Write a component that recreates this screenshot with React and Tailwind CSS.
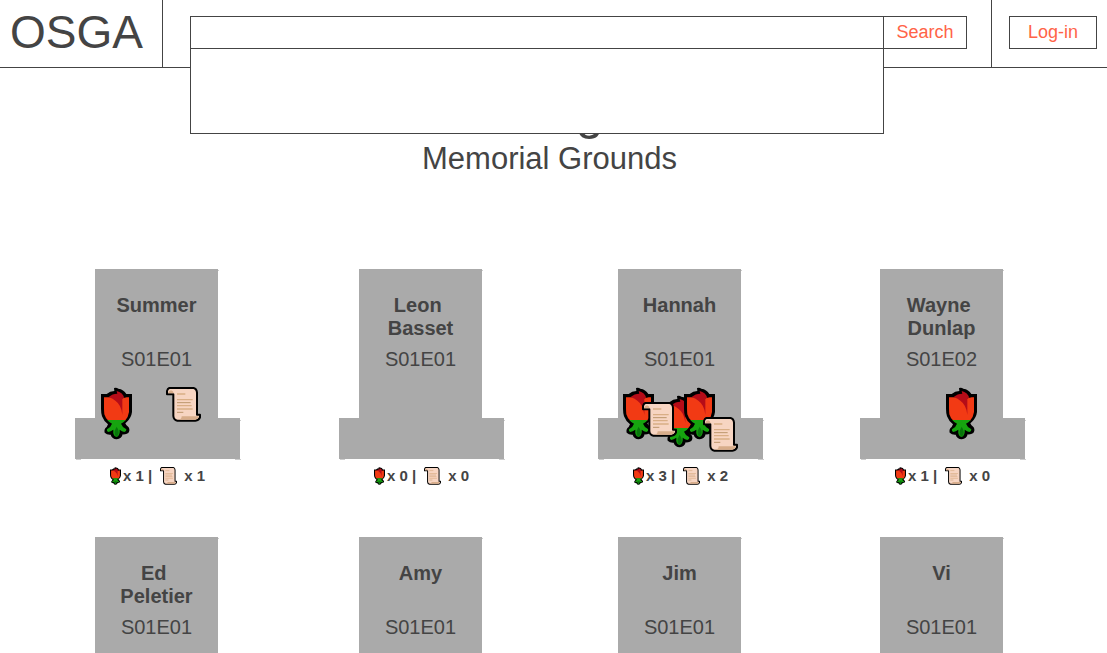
import React from "react";

const graves = [
  {
    name: "Summer",
    episode: "S01E01",
    roses: [{ x: 26, y: 118 }],
    scrolls: [{ x: 91, y: 118 }],
  },
  { name: "Leon \nBasset", episode: "S01E01", roses: [], scrolls: [] },
  {
    name: "Hannah",
    episode: "S01E01",
    roses: [
      { x: 25, y: 118 },
      { x: 66, y: 126 },
      { x: 86, y: 118 },
    ],
    scrolls: [
      { x: 44, y: 133 },
      { x: 105, y: 148 },
    ],
  },
  { name: "Wayne \nDunlap", episode: "S01E02", roses: [{ x: 86, y: 118 }], scrolls: [] },
  { name: "Ed \nPeletier", episode: "S01E01", roses: [], scrolls: [] },
  { name: "Amy", episode: "S01E01", roses: [], scrolls: [] },
  { name: "Jim", episode: "S01E01", roses: [], scrolls: [] },
  { name: "Vi", episode: "S01E01", roses: [], scrolls: [] },
];

function Rose({ className, style }) {
  return (
    <svg viewBox="0 0 93 159" preserveAspectRatio="none" className={className} style={style} aria-hidden="true">
      <path
        d="M0 21H17Q27 12 40 12L39 3Q46 0 52 5Q68 7 76 21H93V75Q91 92 78 104L73 109Q75 116 83 121Q88 130 82 138Q75 143 65 142Q62 155 47 157Q33 156 29 143Q18 144 11 137Q8 126 17 120L21 112Q8 102 3 88Q0 78 0 65Z"
        fill="#000"
      />
      <path d="M9 31H25Q43 25 54 37L77 31H84V75Q82 91 72 101H22Q13 93 10 82Q9 73 9 63Z" fill="#f23a14" />
      <path d="M23 30Q34 20 49 20L47 12Q64 16 70 32L64 33V83Q61 54 44 42Q36 35 23 30Z" fill="#b50c18" />
      <path d="M19 99H74Q68 107 60 110Q64 121 76 127Q77 134 70 135Q63 134 56 128Q58 145 47 150Q35 147 37 128Q29 134 22 135Q16 133 18 127Q29 122 33 110Q25 107 19 99Z" fill="#16a40f" />
      <path d="M47 119Q56 133 52 143L47 150L41 143Q39 130 47 119Z" fill="#08760b" />
    </svg>
  );
}

function Scroll({ className, style }) {
  return (
    <svg viewBox="0 0 105 105" preserveAspectRatio="none" className={className} style={style} aria-hidden="true">
      <path
        d="M10 3H83Q92 5 93 17V83H102V91Q99 100 88 101H34Q23 99 22 87V22H3V12Q5 5 10 3Z"
        fill="#f7d5c2"
        stroke="#000"
        strokeWidth="6"
        strokeLinejoin="round"
      />
      <path d="M6 19Q7 11 15 10Q22 12 23 19Z" fill="#d8ad8a" />
      <path d="M47 88H98Q97 97 87 98H36Q47 98 47 88Z" fill="#d8ad8a" />
      <path d="M33 21H58M33 38H80M33 56H77M33 66H80" stroke="#d9ae85" strokeWidth="4" />
      <path d="M33 47H74M33 76H52" stroke="#bc966b" strokeWidth="3" />
    </svg>
  );
}

function Grave({ grave }) {
  return (
    <li className="flex flex-col items-center">
      <div className="relative h-[191px] w-[165px]">
        <svg viewBox="0 0 167 192" className="absolute left-0 top-0 h-[192px] w-[167px] max-w-none" aria-hidden="true">
          <path d="M20 0H143V149H165V190H0V149H20Z" fill="#aaa" />
          <path d="M143 1h1v1h-1zM165 151h1v1h-1zM1 190h5v1h-5zM160 190h6v1h-6z" fill="#ccc" />
        </svg>
        <div className="relative ml-5 w-[123px] pt-[25px] text-center text-[20px] leading-[23px]">
          <h3 className="min-h-[46px] whitespace-pre font-bold">{grave.name}</h3>
          <p className="mt-2">{grave.episode}</p>
        </div>
        {grave.roses.map((p, i) => (
          <Rose key={i} className="absolute h-[53px] w-[31px]" style={{ left: p.x, top: p.y }} />
        ))}
        {grave.scrolls.map((p, i) => (
          <Scroll key={i} className="absolute h-[35px] w-[35px]" style={{ left: p.x, top: p.y }} />
        ))}
      </div>
      <p className="mt-[7px] flex h-[18px] items-center text-[15px] font-bold leading-[18px]">
        <Rose className="mr-[2px] h-[18px] w-[11px]" />
        <span>x {grave.roses.length} |</span>
        <Scroll className="ml-2 mr-[7px] h-[18px] w-[17px]" />
        <span>x {grave.scrolls.length}</span>
      </p>
    </li>
  );
}

export default function App() {
  return (
    <div className="min-h-screen bg-white font-['Liberation_Sans',Arial,sans-serif] text-[#444]">
      <header className="flex h-[68px] border-b border-[#444]">
        <a href="#home" className="w-[163px] border-r border-[#444] pl-[10px] text-[46px] leading-[64px]">
          OSGA
        </a>
        <form className="flex flex-1 items-start pl-[27px] pr-6 pt-4" onSubmit={(e) => e.preventDefault()}>
          <div className="relative z-10 flex-1">
            <input
              type="text"
              aria-label="Search"
              className="block h-[33px] w-full border border-[#444] bg-white px-2 text-[18px] outline-none"
            />
            <div className="absolute inset-x-0 top-8 h-[86px] border border-[#444] bg-white" />
          </div>
          <button type="submit" className="z-10 -ml-px h-[33px] w-[84px] border border-[#444] bg-white pb-[2px] text-[18px] leading-[28px] text-[#ff6347]">
            Search
          </button>
        </form>
        <div className="border-l border-[#444] pl-[17px] pr-[10px] pt-4">
          <button type="button" className="block h-[33px] w-[88px] border border-[#444] bg-white pb-[2px] text-[18px] leading-[28px] text-[#ff6347]">
            Log-in
          </button>
        </div>
      </header>
      <main className="pt-[19px]">
        <div className="pr-2 text-center">
          <h1 className="text-[50px] leading-[50px]">The Walking Dead's</h1>
          <h2 className="mt-1 text-[31px] leading-[36px]">Memorial Grounds</h2>
        </div>
        <ul className="mt-[92px] grid grid-cols-[267fr_261fr_257fr_267fr] gap-y-[52px] pb-[52px] pl-6 pr-[31px]">
          {graves.map((grave) => (
            <Grave key={grave.name} grave={grave} />
          ))}
        </ul>
      </main>
    </div>
  );
}
